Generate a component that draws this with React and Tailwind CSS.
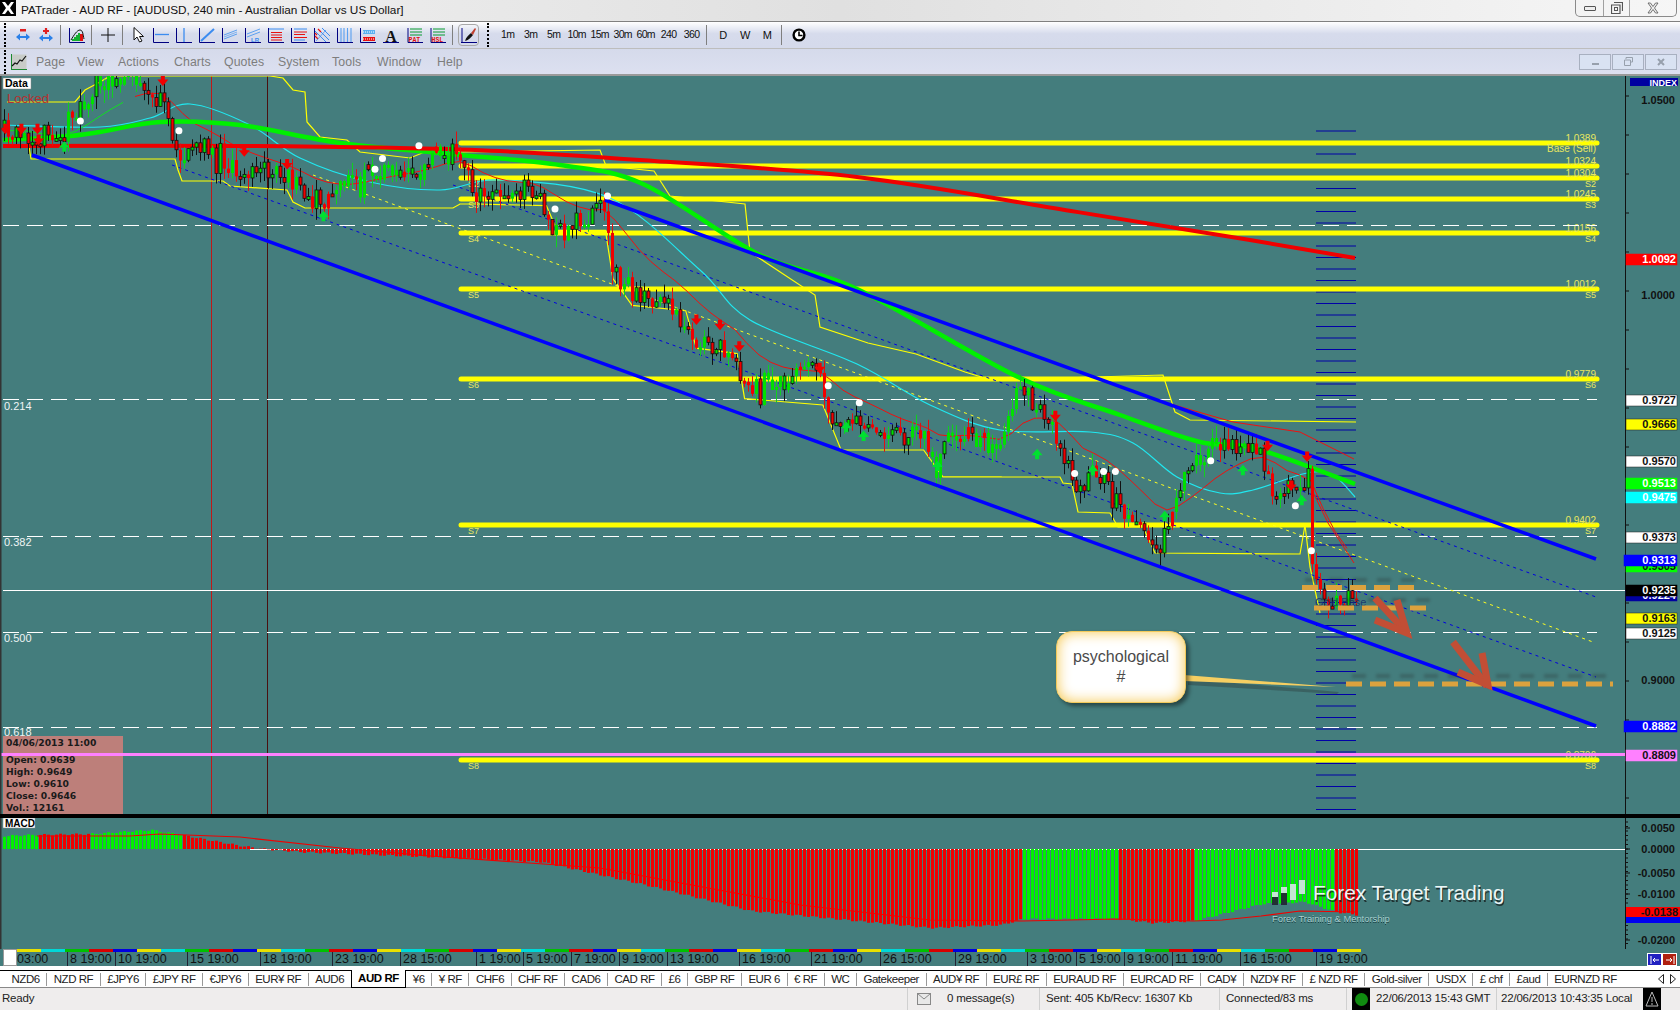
import React from 'react';

// reference was read partly from the shrunk copy, S brings those numbers to page pixels
const S = 1680 / 1568;
const sc = (pts) => pts.map(([x, y]) => [x * S, y * S]);
const toPts = (pts) => pts.map(([x, y]) => `${x.toFixed(1)},${y.toFixed(1)}`).join(' ');

// catmull-rom through the hand read points, so the moving averages don't look like polygons
function smooth(pts) {
  let d = `M${pts[0][0]} ${pts[0][1]}`;
  for (let i = 0; i < pts.length - 1; i++) {
    const p0 = pts[Math.max(i - 1, 0)];
    const p1 = pts[i];
    const p2 = pts[i + 1];
    const p3 = pts[Math.min(i + 2, pts.length - 1)];
    const c1x = p1[0] + (p2[0] - p0[0]) / 6;
    const c1y = p1[1] + (p2[1] - p0[1]) / 6;
    const c2x = p2[0] - (p3[0] - p1[0]) / 6;
    const c2y = p2[1] - (p3[1] - p1[1]) / 6;
    d += `C${c1x.toFixed(1)} ${c1y.toFixed(1)} ${c2x.toFixed(1)} ${c2y.toFixed(1)} ${p2[0].toFixed(1)} ${p2[1].toFixed(1)}`;
  }
  return d;
}

function lerp(pts, x) {
  if (x <= pts[0][0]) return pts[0][1];
  for (let i = 1; i < pts.length; i++) {
    if (x <= pts[i][0]) {
      const [x0, y0] = pts[i - 1];
      const [x1, y1] = pts[i];
      return y0 + ((y1 - y0) * (x - x0)) / (x1 - x0);
    }
  }
  return pts[pts.length - 1][1];
}

let seed = 17;
const rnd = () => {
  seed = (seed * 16807) % 2147483647;
  return seed / 2147483647;
};

const pricePath = sc([
  [0, 122], [20, 122], [35, 132], [55, 128], [70, 108], [85, 88], [105, 78], [125, 72], [140, 82], [150, 95], [157, 122], [172, 150],
  [190, 135], [210, 155], [240, 158], [265, 165], [290, 185], [320, 175], [345, 160], [385, 155], [415, 140], [432, 150], [440, 182],
  [470, 178], [490, 170], [520, 210], [550, 205], [563, 190], [570, 240], [590, 275], [625, 285], [650, 318], [685, 330], [695, 368],
  [720, 358], [760, 345], [778, 395], [800, 388], [830, 405], [860, 408], [872, 430], [890, 402], [930, 418], [950, 360], [980, 398],
  [1005, 462], [1020, 435], [1050, 478], [1080, 510], [1100, 450], [1130, 418], [1170, 412], [1195, 465], [1215, 450], [1221, 435],
  [1224, 520], [1232, 562], [1265, 560],
]);
const greenZones = sc([[60, 130], [305, 420], [710, 760], [850, 950], [1090, 1135]]);

const candles = [];
const ema = [];
let prev = lerp(pricePath, 3);
let avg = prev;
for (let x = 3; x < 1356; x += 4) {
  const target = lerp(pricePath, x);
  const big = rnd() < 0.18 ? 2 : 1;
  const close = target + (rnd() - 0.5) * 20 * big;
  const top = Math.min(prev, close);
  const bot = Math.max(prev, close);
  const zone = greenZones.some(([a, b]) => x >= a && x <= b);
  const up = zone ? rnd() < 0.8 : close < prev;
  candles.push({
    x,
    top,
    h: Math.max(bot - top, 3),
    hi: top - rnd() * 13,
    lo: bot + rnd() * 13,
    up,
    line: zone ? rnd() < 0.2 : rnd() < 0.65,
  });
  avg += (target - avg) * 0.09;
  ema.push([x, avg]);
  prev = close;
}

const blueUpper = [[605, 200], [1596, 559]];
const blueLower = [[32, 155], [1596, 726]];
const redSlow = [[3, 146], [240, 146], [400, 148], [500, 151], [640, 160], [857, 177], [1071, 211], [1250, 240], [1355, 258]];
const greenSlow = [[3, 140], [60, 137], [100, 132], [160, 122], [240, 125], [340, 143], [461, 155], [560, 165], [643, 184], [760, 255], [857, 289], [1018, 377], [1120, 415], [1200, 442], [1254, 448], [1355, 484]];
const cyan = [[3, 125], [100, 127], [150, 118], [190, 104], [250, 125], [300, 158], [370, 182], [440, 190], [500, 180], [610, 198], [700, 270], [750, 320], [857, 364], [930, 405], [1000, 430], [1090, 432], [1133, 443], [1177, 477], [1220, 493], [1253, 490], [1307, 473], [1333, 475], [1355, 497]];
const yellowUp = [[7, 102], [75, 102], [85, 90], [100, 82], [110, 76], [270, 76], [283, 78], [293, 90], [305, 92], [307, 122], [320, 137], [347, 140], [360, 152], [410, 158], [437, 147], [461, 152], [600, 150], [606, 166], [654, 171], [670, 196], [745, 204], [750, 252], [815, 295], [820, 327], [868, 343], [916, 354], [965, 372], [991, 380], [1163, 375], [1175, 412], [1190, 420], [1356, 422]];
const yellowLow = [
  [28, 140], [31, 159], [175, 159], [178, 170], [182, 181], [223, 181], [230, 186], [287, 190], [293, 202], [305, 208], [453, 208], [460, 204], [477, 204],
  ...sc([[510, 192], [520, 215], [565, 215], [572, 260], [590, 285], [640, 290], [650, 325], [688, 330], [695, 372], [768, 378], [785, 420], [862, 420], [880, 445], [935, 445]]),
  [1000, 477], [1060, 477], [1063, 483], [1072, 484], [1078, 512], [1110, 513], [1118, 527], [1143, 527], [1155, 553], [1300, 554], [1305, 525], [1310, 567], [1320, 613],
];
const upperRed = [[1150, 398], [1233, 422], [1300, 432], [1354, 459]];
const lowerRed = [[1307, 480], [1328, 523], [1354, 563]];

const yellowLevels = [
  [143, '1.0389', ''], [166, '1.0324', ''], [178, '1.0304', 'S2'], [199, '1.0245', 'S3'], [233, '1.0156', 'S4'],
  [289, '1.0012', 'S5'], [379, '0.9779', 'S6'], [525, '0.9402', 'S7'], [760, '0.8706', 'S8'],
];
const dashed = [225, 399, 536, 632, 727];
const fibs = [[410, '0.214'], [546, '0.382'], [642, '0.500'], [736, '0.618']];

const dots = sc([[75, 113], [167, 122], [357, 148], [350, 158], [391, 136], [518, 195], [567, 183], [773, 360], [802, 376], [1003, 442], [1030, 440], [1041, 440], [1130, 430], [1209, 472], [1224, 514]]);
const redArrows = sc([[5, 122], [20, 122], [35, 122], [152, 77], [36, 132], [228, 143], [268, 155], [650, 300], [672, 305], [690, 325], [765, 345], [985, 390], [1183, 418], [1205, 455], [1220, 428]]);
const greenArrows = sc([[60, 135], [302, 200], [790, 397], [806, 405], [875, 433], [968, 422], [1020, 437], [1087, 480], [1160, 437], [1215, 465]]);

const axisLabels = [
  [400, '0.9727', '#ffffff', '#111'],
  [424, '0.9666', '#ffff00', '#111'],
  [461, '0.9570', '#ffffff', '#111'],
  [483, '0.9513', '#00ff00', '#fff'],
  [497, '0.9475', '#00ffff', '#fff'],
  [537, '0.9373', '#ffffff', '#111'],
  [566, '0.9305', '#00ff00', '#111'],
  [560, '0.9313', '#0000ff', '#fff'],
  [595, '0.9224', '#0000a0', '#fff'],
  [590, '0.9235', '#000000', '#fff'],
  [618, '0.9163', '#ffff00', '#111'],
  [633, '0.9125', '#ffffff', '#111'],
  [726, '0.8882', '#0000ff', '#fff'],
  [259, '1.0092', '#ff0000', '#fff'],
  [755, '0.8809', '#ff80ff', '#111'],
];

const priceTicks = [[100, '1.0500'], [295, '1.0000'], [680, '0.9000']];

const macdBottom = [[3, 836], [30, 835], [90, 834], [150, 830], [180, 835], [240, 846], [262, 849], [300, 852], [430, 857], [540, 862], [640, 884], [750, 911], [930, 928], [1000, 925], [1022, 919], [1117, 919], [1152, 923], [1193, 921], [1261, 904], [1304, 902], [1335, 912], [1356, 915]];
const macdSignal = [[37, 836], [130, 836], [160, 834], [240, 837], [340, 848], [430, 856], [600, 868], [800, 905], [930, 920], [1022, 921], [1117, 919], [1193, 921], [1222, 920], [1261, 916], [1300, 911], [1356, 912]];
const macdGreen = [[3, 37], [89, 182], [1021, 1117], [1193, 1334]];

const timeLabels = [
  ['03:00', 'w-[50px]'], ['8 19:00', 'w-[48px]'], ['10 19:00', 'w-[72px]'], ['15 19:00', 'w-[73px]'], ['18 19:00', 'w-[72px]'], ['23 19:00', 'w-[68px]'],
  ['28 15:00', 'w-[76px]'], ['1 19:00', 'w-[47px]'], ['5 19:00', 'w-[48px]'], ['7 19:00', 'w-[48px]'], ['9 19:00', 'w-[48px]'], ['13 19:00', 'w-[72px]'],
  ['16 19:00', 'w-[72px]'], ['21 19:00', 'w-[69px]'], ['26 15:00', 'w-[75px]'], ['29 19:00', 'w-[72px]'], ['3 19:00', 'w-[49px]'], ['5 19:00', 'w-[48px]'],
  ['9 19:00', 'w-[48px]'], ['11 19:00', 'w-[68px]'], ['16 15:00', 'w-[76px]'], ['19 19:00', 'w-[60px]'],
];

const tabs = ['NZD6', 'NZD RF', '£JPY6', '£JPY RF', '€JPY6', 'EUR¥ RF', 'AUD6', 'AUD RF', '¥6', '¥ RF', 'CHF6', 'CHF RF', 'CAD6', 'CAD RF', '£6', 'GBP RF', 'EUR 6', '€ RF', 'WC', 'Gatekeeper', 'AUD¥ RF', 'EUR£ RF', 'EURAUD RF', 'EURCAD RF', 'CAD¥', 'NZD¥ RF', '£ NZD RF', 'Gold-silver', 'USDX', '£ chf', '£aud', 'EURNZD RF'];

const stripColors = ['#e8e000', '#00d8d8', '#00c000', '#d80000', '#0000e0'];

function Grip() {
  return <div className="h-[24px] w-[3px] self-center border-l-2 border-dotted border-black" />;
}

function Sep() {
  return <div className="mx-[3px] h-[20px] w-px self-center bg-[#7f7f7f]" />;
}

function Ic({ children, className = '' }) {
  return (
    <svg viewBox="0 0 16 16" className={`h-[16px] w-[16px] ${className}`}>
      {children}
    </svg>
  );
}

const Axes = () => <path d="M.5 1V15.5H16" fill="none" stroke="#000080" />;

const toolIcons = [
  <Ic><rect x="5" y="2" width="6" height="2.5" fill="#e02020" /><path d="M1 10l4-3.5v7zM15 10l-4-3.5v7z" fill="#2a80e8" /><rect x="5" y="9" width="6" height="2" fill="#2a80e8" /></Ic>,
  <Ic><path d="M8 1v6M5 4h6" stroke="#e02020" strokeWidth="2.2" /><path d="M1 11l4-3.5v7zM15 11l-4-3.5v7z" fill="#2a80e8" /><rect x="5" y="10" width="6" height="2" fill="#2a80e8" /></Ic>,
];

const drawIcons = [
  <Ic><Axes /><path d="M2 7.5H16" stroke="#3b8cf0" strokeWidth="1.3" /></Ic>,
  <Ic><Axes /><path d="M8 1V15" stroke="#3b8cf0" strokeWidth="1.3" /></Ic>,
  <Ic><Axes /><path d="M2 14L15 2" stroke="#3b8cf0" strokeWidth="2" /></Ic>,
  <Ic><Axes /><path d="M2 8L15 3M2 12L15 7" stroke="#5aa0f0" strokeWidth="1" /><path d="M2 10L15 5" stroke="#5aa0f0" strokeWidth=".7" /></Ic>,
  <Ic><Axes /><path d="M2 7L15 2M2 10L15 5" stroke="#5aa0f0" strokeWidth="1" /><text x="6" y="14.5" fontSize="6" fontWeight="700" fill="#3b8cf0" className="font-['Liberation_Sans',sans-serif]">LR</text></Ic>,
  <Ic><Axes /><path d="M1 2H16" stroke="#3b8cf0" /><path d="M3 5.5H14M3 8H14M3 10.5H14M3 13H14" stroke="#e81010" strokeWidth="1.2" /></Ic>,
  <Ic><Axes /><path d="M3 2H16M3 13H14" stroke="#3b8cf0" /><path d="M3 5H16M3 7.5H14M3 10.5H16" stroke="#e81010" strokeWidth="1.2" /></Ic>,
  <Ic><Axes /><path d="M1 4L12 15M4 2L15 13M8 1L16 9" stroke="#3b8cf0" strokeWidth="1" /><path d="M1 6L3 8M4 2L7 5M1 9L4 12" stroke="#e81010" strokeWidth="1.2" /><path d="M2 14L12 3" stroke="#3b8cf0" strokeWidth=".7" /></Ic>,
  <Ic><Axes /><path d="M4 1V15M7 1V15M10.500 1V15M14 1V15" stroke="#5aa0f0" strokeWidth="1.1" /></Ic>,
  <Ic><Axes /><rect x="3" y="3" width="12" height="4" fill="#5ab0f0" /><rect x="3" y="10" width="12" height="4" fill="#e81010" /><path d="M3 5h12M3 12h12" stroke="#fff" strokeDasharray="1 1" /></Ic>,
  <Ic><path d="M0 15.500H16" stroke="#000080" /><text x="8" y="15" textAnchor="middle" fontSize="16" fontWeight="700" fill="#111" className="font-['Liberation_Serif',serif]">A</text></Ic>,
  <Ic><path d="M1 1V15.500H16" fill="none" stroke="#000080" /><path d="M3 2H15M3 5H15M3 8H15" stroke="#089a30" /><text x="1.500" y="14.500" fontSize="6.500" fontWeight="700" fill="#e01010" className="font-['Liberation_Mono',monospace]">PAT</text></Ic>,
  <Ic><path d="M1 1V15.500H16" fill="none" stroke="#000080" /><path d="M3 2H15M3 5H15M3 8H15" stroke="#089a30" /><text x="1.500" y="14.500" fontSize="6.500" fontWeight="700" fill="#e01010" className="font-['Liberation_Mono',monospace]">HSL</text></Ic>,
];

const frames = ['1m', '3m', '5m', '10m', '15m', '30m', '60m', '240', '360'];

function TitleBar() {
  return (
    <div className="flex h-[22px] items-start border-b border-[#808080] bg-linear-to-r from-[#f4f4f4] via-[#e0e0e0] to-[#f6f6f6]">
      <div className="flex h-[16px] w-[16px] items-center justify-center bg-black">
        <svg viewBox="0 0 14 14" className="h-[14px] w-[14px]">
          <path d="M1 1H4L7 5L10 1H13L9 7L13 13H10L7 9L4 13H1L5 7Z" fill="#fff" />
        </svg>
      </div>
      <div className="ml-[5px] text-[11.800px] leading-[21px] text-[#111]">PATrader - AUD RF - [AUDUSD, 240 min - Australian Dollar vs US Dollar]</div>
      <div className="mr-[3px] ml-auto flex h-[17px] w-[102px] rounded-b-[5px] border border-t-0 border-[#8a8a8a]">
        <div className="flex w-[28px] items-center justify-center border-r border-[#a0a0a0]">
          <div className="h-[5px] w-[12px] rounded-[1px] border border-[#555] bg-[#eee]" />
        </div>
        <div className="flex w-[26px] items-center justify-center border-r border-[#a0a0a0]">
          <svg viewBox="0 0 12 12" className="h-[12px] w-[12px]"><path d="M3 .5H11.500V9M.5 3H9V11.500H.5Z" fill="none" stroke="#555" strokeWidth="1.200" /><rect x="3.500" y="5.500" width="3" height="3" fill="none" stroke="#555" /></svg>
        </div>
        <div className="flex flex-1 items-center justify-center">
          <svg viewBox="0 0 12 12" className="h-[12px] w-[12px]"><path d="M1 1H3.500L6 4.500L8.500 1H11L7.500 6L11 11H8.500L6 7.500L3.500 11H1L4.500 6Z" fill="#eee" stroke="#555" strokeWidth=".8" /></svg>
        </div>
      </div>
    </div>
  );
}

function Toolbar() {
  return (
    <div className="flex h-[27px] items-center border-b border-[#bdbdbd] bg-linear-to-b from-white via-[#d6dbec] via-45% to-[#d5daeb] pl-[4px]">
      <Grip />
      {toolIcons.map((ic, i) => (
        <div key={i} className={`flex w-[23px] justify-center ${i === 0 ? 'ml-[4px]' : ''}`}>{ic}</div>
      ))}
      <Sep />
      <div className="ml-[1px] flex w-[23px] justify-center">
        <Ic><Axes /><path d="M3 14V12H5V10H7V8H9V6H11V14Z" fill="#14b030" /><rect x="11" y="7" width="3" height="7" fill="#e01010" /><path d="M2 13C5 8 8 3 11 3S14 8 15 12" fill="none" stroke="#111" /></Ic>
      </div>
      <Sep />
      <div className="ml-[1px] flex w-[23px] justify-center">
        <svg viewBox="0 0 14 14" className="h-[14px] w-[14px]"><path d="M7 0V14M0 7H14" stroke="#111" /></svg>
      </div>
      <Sep />
      <div className="ml-[1px] flex w-[23px] justify-center">
        <svg viewBox="0 0 11 16" className="h-[16px] w-[11px]"><path d="M1 .5V13L4 10L6.500 15L9 14L6.500 9.500H10.500Z" fill="#fff" stroke="#111" /></svg>
      </div>
      <div className="-ml-[1px] flex">
        {drawIcons.map((ic, i) => (
          <div key={i} className="flex w-[23.100px] justify-center">{ic}</div>
        ))}
      </div>
      <Sep />
      <div className="ml-[2px] flex h-[22px] w-[21px] items-center justify-center rounded-[4px] border border-[#a8a8a8]">
        <svg viewBox="0 0 16 16" className="h-[16px] w-[16px]"><path d="M0 15.500H16" stroke="#000080" /><path d="M1 1V15" stroke="#000080" /><path d="M4 14C5 10 8 8 10 6L12 8C10 10 8 13 4 14Z" fill="#111" /><path d="M10 6L14 1L15 2L12 8Z" fill="#c04030" /></svg>
      </div>
      <div className="ml-[8px]"><Grip /></div>
      <div className="ml-[6px] flex items-center text-[10.500px] tracking-[-0.6px] text-[#111]">
        {frames.map((t) => (
          <div key={t} className="w-[23px] text-center">{t}</div>
        ))}
        <Sep />
        <div className="ml-[2px] flex text-[11px] tracking-normal">
          {['D', 'W', 'M'].map((t) => (
            <div key={t} className="w-[22px] text-center">{t}</div>
          ))}
        </div>
        <Sep />
      </div>
      <div className="ml-[7px]">
        <svg viewBox="0 0 14 14" className="h-[14px] w-[14px]"><circle cx="7" cy="7" r="5.400" fill="#fff" stroke="#000" strokeWidth="2.400" /><path d="M7 3.500V7.500H10.500" fill="none" stroke="#000" strokeWidth="1.600" /></svg>
      </div>
    </div>
  );
}

const menus = [['Page', 'w-[41px]'], ['View', 'w-[41px]'], ['Actions', 'w-[56px]'], ['Charts', 'w-[50px]'], ['Quotes', 'w-[54px]'], ['System', 'w-[54px]'], ['Tools', 'w-[45px]'], ['Window', 'w-[60px]'], ['Help', 'w-[30px]']];

function MenuBar() {
  return (
    <div className="flex h-[27px] items-center border-b-[2px] border-[#9a9a9a] bg-linear-to-b from-[#d5daeb] to-[#dce0f0] pl-[4px]">
      <Grip />
      <svg viewBox="0 0 16 16" className="ml-[4px] h-[16px] w-[16px]">
        <rect x=".5" y=".5" width="15" height="15" fill="#c8ccc8" />
        <path d="M0 15.500H16M.5 0V16" stroke="#1a8a30" />
        <path d="M1 12L4 9L6 10L9 6L11 7L15 2" fill="none" stroke="#111" strokeWidth="1.200" />
      </svg>
      <div className="mt-[2px] ml-[9px] flex text-[12.300px] tracking-[0.1px] text-[#7d7d7d]">
        {menus.map(([m, w]) => (
          <div key={m} className={w}>{m}</div>
        ))}
      </div>
      <div className="mr-[3px] ml-auto flex gap-[1px]">
        <div className="flex h-[16px] w-[32px] items-center justify-center border border-[#a8b0c0] bg-[#d9e2f2]"><div className="mt-[4px] h-[2px] w-[7px] bg-[#97a0ac]" /></div>
        <div className="flex h-[16px] w-[32px] items-center justify-center border border-[#a8b0c0] bg-[#d9e2f2]">
          <svg viewBox="0 0 9 9" className="h-[9px] w-[9px]"><path d="M2 2V.5H8.500V5H6.500M.5 3H6.500V8.500H.5Z" fill="none" stroke="#97a0ac" /></svg>
        </div>
        <div className="flex h-[16px] w-[32px] items-center justify-center border border-[#a8b0c0] bg-[#d9e2f2]">
          <svg viewBox="0 0 8 8" className="h-[8px] w-[8px]"><path d="M1 1L7 7M7 1L1 7" stroke="#97a0ac" strokeWidth="2" /></svg>
        </div>
      </div>
    </div>
  );
}

function AxisTag({ y, text, bg, fg }) {
  const wide = bg === '#0000ff';
  return (
    <g>
      <rect x={wide ? 1624 : 1626} y={y - 5} width={wide ? 53 : 51} height="11" fill={bg} stroke={bg === '#ffffff' || bg === '#ffff00' ? '#222' : bg} strokeWidth=".5" />
      <text x="1676" y={y + 4} textAnchor="end" fontSize="11" fontWeight="700" fill={fg}>{text}</text>
    </g>
  );
}

function MainChart() {
  const ticks = [];
  for (let y = 96; y < 815; y += 39) ticks.push(y);
  const nav = [];
  for (let y = 131; y < 815; y += 11.500) nav.push(y);
  return (
    <div className="relative h-[738px]">
      <svg viewBox="0 76 1680 738" className="block h-[738px] w-[1680px] font-['Liberation_Sans',sans-serif]">
        <rect x="0" y="76" width="1680" height="738" fill="#447d7d" />
        <path d="M211.500 76V814" stroke="#c01818" />
        <path d="M267.500 76V814" stroke="#4a1010" />

        {nav.map((y) => (
          <path key={y} d={`M1316 ${y}H1356`} stroke="#0000a8" />
        ))}

        {yellowLevels.map(([y, t, s]) => (
          <g key={y}>
            <path d={`M461 ${y}H1597`} stroke="#ffff00" strokeWidth="5" strokeLinecap="round" />
            <text x="1596" y={y - 1} textAnchor="end" fontSize="10" fill="#e8e860">{t}</text>
            {s && <text x="1596" y={y + 9} textAnchor="end" fontSize="9" fill="#e8e860">{s}</text>}
            {s && <text x="468" y={y + 9} fontSize="9" fill="#e8e860">{s}</text>}
          </g>
        ))}
        <text x="1596" y="152" textAnchor="end" fontSize="10" fill="#e8e860">Base (Sell)</text>

        {dashed.map((y) => (
          <path key={y} d={`M3 ${y + 0.5}H1597`} stroke="#fff" strokeWidth="1.200" strokeDasharray="16 8" />
        ))}
        <path d="M3 590.500H1625" stroke="#fff" strokeWidth="1.200" />
        {fibs.map(([y, t]) => (
          <text key={y} x="4" y={y} fontSize="11" fill="#eef4f4">{t}</text>
        ))}

        <polyline points={toPts(yellowUp)} fill="none" stroke="#ffff00" strokeWidth="1.200" />
        <polyline points={toPts(yellowLow)} fill="none" stroke="#ffff00" strokeWidth="1.200" />
        <path d="M172 165L1596 677M453 185L1596 597" stroke="#0000e0" strokeDasharray="3 4" fill="none" />
        <path d="M313 175L1593 642" stroke="#ffff20" strokeDasharray="3 4" fill="none" />

        <path d={smooth(cyan)} fill="none" stroke="#20e8f0" strokeWidth="1.200" />
        <polyline points={toPts(ema.filter((_, i) => i % 3 === 0 && i > 30))} fill="none" stroke="#f01010" strokeWidth="1" />
        <polyline points={toPts(ema.filter((_, i) => i % 3 === 0).slice(0, 11))} fill="none" stroke="#10e020" strokeWidth="1" />
        <polyline points={toPts(upperRed)} fill="none" stroke="#f01010" strokeWidth="1" />
        <polyline points={toPts(lowerRed)} fill="none" stroke="#f01010" strokeWidth="1" />

        <path d={smooth(greenSlow)} fill="none" stroke="#00f000" strokeWidth="4.500" />
        <path d={smooth(redSlow)} fill="none" stroke="#f00000" strokeWidth="4" />

        {candles.map((c) => (
          <g key={c.x}>
            <path d={`M${c.x + 1.500} ${c.hi}V${c.lo}`} stroke={c.line ? '#111' : c.up ? '#10d020' : '#e01010'} />
            <rect x={c.x} y={c.top} width="3" height={c.h} fill={c.up ? '#00e000' : '#f00000'} stroke={c.line ? '#111' : 'none'} strokeWidth=".8" />
          </g>
        ))}

        <path d={`M${blueUpper[0][0]} ${blueUpper[0][1]}L${blueUpper[1][0]} ${blueUpper[1][1]}`} stroke="#0000ff" strokeWidth="3.500" />
        <path d={`M${blueLower[0][0]} ${blueLower[0][1]}L${blueLower[1][0]} ${blueLower[1][1]}`} stroke="#0000ff" strokeWidth="3.500" />
        <path d="M0 754.500H1625" stroke="#ff80ff" strokeWidth="3" />

        {dots.map(([x, y]) => (
          <circle key={`${x}-${y}`} cx={x} cy={y} r="3.500" fill="#fff" />
        ))}
        {redArrows.map(([x, y]) => (
          <path key={`${x}-${y}`} d={`M${x - 2} ${y - 7}h4v4h3.500l-5.500 6.500l-5.500-6.500h3.500Z`} fill="#f00000" />
        ))}
        {greenArrows.map(([x, y]) => (
          <path key={`${x}-${y}`} d={`M${x - 2} ${y + 7}h4v-4h3.500l-5.500-6.500l-5.500 6.500h3.500Z`} fill="#00e030" />
        ))}
        <text x="1315" y="606" fontSize="11" fill="#1c3a70">Gold Base</text>

        <g className="blur-[1.500px]" opacity=".25">
          <path d="M1305 580H1420M1320 600H1432M1352 676H1616" stroke="#222" strokeWidth="4" strokeDasharray="14 10" />
        </g>
        <g stroke="#dca23e" strokeWidth="5" strokeDasharray="16 8" fill="none">
          <path d="M1302 587.500H1418" />
          <path d="M1314 608H1429" />
          <path d="M1346 684H1613" />
        </g>
        <g stroke="#c24e35" strokeWidth="7" fill="none">
          <path d="M1375 598L1407 633" />
          <path d="M1375 620L1407 633L1397 600" />
          <path d="M1453 642L1487 686" />
          <path d="M1458 672L1488 685L1482 653" />
        </g>
        <path d="M1186 681L1186 675L1337 688L1335 690Z" fill="#262626" opacity=".3" transform="translate(2 4)" />
        <path d="M1184 675L1336 687L1184 681Z" fill="#f6cf62" />

        <rect x="3" y="78" width="28" height="11" fill="#fff" stroke="#888" strokeWidth=".5" />
        <text x="5" y="87" fontSize="10.500" fontWeight="700" fill="#000">Data</text>
        <text x="7" y="103" fontSize="13" fill="#b83030">Locked</text>

        <path d="M0 76V814" stroke="#333" strokeWidth="3" />
        <rect x="1625" y="76" width="55" height="738" fill="#447d7d" />
        <path d="M1625.500 76V814" stroke="#111" />
        {ticks.map((y) => (
          <path key={y} d={`M1626 ${y}h3`} stroke="#111" />
        ))}
        <rect x="1630" y="78" width="48" height="8" fill="#0000a0" />
        <text x="1677" y="85.500" textAnchor="end" fontSize="9" fontWeight="700" fill="#fff">INDEX</text>
        {priceTicks.map(([y, t]) => (
          <text key={y} x="1675" y={y + 4} textAnchor="end" fontSize="11" fontWeight="700" fill="#111">{t}</text>
        ))}
        {axisLabels.map(([y, t, bg, fg]) => (
          <AxisTag key={t} y={y} text={t} bg={bg} fg={fg} />
        ))}
      </svg>

      <div className="absolute top-[555px] left-[1056px] flex h-[72px] w-[130px] flex-col items-center justify-center rounded-[16px] border border-[#f2c95a] bg-white text-center text-[16px] leading-[20px] text-[#4a4a4a] shadow-[inset_0_0_14px_#f6c64a,3px_3px_4px_rgba(0,0,0,0.45)]">
        <div>psychological</div>
        <div>#</div>
      </div>

      <div className="absolute top-[660px] left-[3px] h-[78px] w-[120px] bg-[#bd7f7a] pt-[1px] pl-[3px] font-['DejaVu_Sans',sans-serif] text-[9.200px] leading-[12px] font-bold text-[#1a1a1a]">
        <div className="mb-[5px]">04/06/2013 11:00</div>
        <div>Open: 0.9639</div>
        <div>High: 0.9649</div>
        <div>Low: 0.9610</div>
        <div>Close: 0.9646</div>
        <div>Vol.: 12161</div>
        <div className="absolute top-[17px] left-0 h-[3px] w-full bg-[#ff80ff]" />
      </div>
    </div>
  );
}

function Macd() {
  const bars = [];
  for (let x = 3; x < 1356; x += 4) {
    const green = macdGreen.some(([a, b]) => x >= a && x < b);
    const v = lerp(macdBottom, x) + Math.sin(x * 0.4) * 0.8;
    bars.push({ x, green, y: Math.min(v, 849), h: Math.abs(v - 849) });
  }
  const labels = [[828, '0.0050'], [849, '0.0000'], [873, '-0.0050'], [894, '-0.0100'], [940, '-0.0200']];
  const minor = [];
  for (let y = 822; y < 948; y += 4.500) minor.push(y);
  return (
    <svg viewBox="0 818 1680 131" className="block h-[131px] w-[1680px] font-['Liberation_Sans',sans-serif]">
      <rect x="0" y="818" width="1680" height="131" fill="#447d7d" />
      <path d="M250 849.500H1625" stroke="#fff" />
      {bars.map((b) => (
        <rect key={b.x} x={b.x} y={b.y} width="3" height={b.h} fill={b.green ? '#00f000' : '#f00000'} />
      ))}
      <polyline points={toPts(macdSignal)} fill="none" stroke="#f00000" strokeWidth="1.200" />

      <g fill="#d8e8e8" opacity=".9">
        <rect x="1272" y="897" width="6" height="8" fill="#223" />
        <rect x="1281" y="893" width="6" height="12" fill="#223" />
        <rect x="1272" y="892" width="6" height="5" />
        <rect x="1281" y="887" width="6" height="6" />
        <rect x="1290" y="884" width="6" height="16" />
        <rect x="1299" y="880" width="6" height="14" />
      </g>
      <text x="1314" y="902" fontSize="20.800" fill="#111" opacity=".7">Forex Target Trading</text>
      <text x="1313" y="900" fontSize="20.800" fill="#eef6f6">Forex Target Trading</text>
      <text x="1272" y="923" fontSize="9.400" fill="#0c2a30" opacity=".8">Forex Training &amp; Mentorship</text>
      <text x="1272" y="922" fontSize="9.400" fill="#a8d0d0">Forex Training &amp; Mentorship</text>

      <path d="M0 818V949" stroke="#333" strokeWidth="3" />
      <rect x="3" y="818" width="32" height="10" fill="#fff" stroke="#888" strokeWidth=".5" />
      <text x="5" y="826.500" fontSize="10" fontWeight="700" fill="#000">MACD</text>

      <rect x="1626" y="818" width="54" height="131" fill="#447d7d" />
      <path d="M1625.500 818V949" stroke="#111" />
      {minor.map((y) => (
        <path key={y} d={`M1626 ${y}h2`} stroke="#111" />
      ))}
      {labels.map(([y, t]) => (
        <g key={t}>
          <path d={`M1626 ${y}h4`} stroke="#111" />
          <text x="1675" y={y + 4} textAnchor="end" fontSize="11" fontWeight="700" fill="#111">{t}</text>
        </g>
      ))}
      <rect x="1626" y="917" width="54" height="6" fill="#0000f0" />
      <rect x="1626" y="907" width="54" height="10" fill="#ff0000" />
      <text x="1678" y="916" textAnchor="end" fontSize="11" fontWeight="700" fill="#111">-0.0138</text>
    </svg>
  );
}

function TimeAxis() {
  const strip = [];
  for (let i = 0; i * 24 + 17 < 1356; i++) strip.push(i);
  return (
    <div className="relative flex h-[17px] bg-[#447d7d]">
      <div className="z-10 ml-[3px] h-[17px] w-[14px] border border-[#999] bg-white" />
      <div className="relative flex-1">
        <svg viewBox="0 0 1360 3" className="block h-[3px] w-[1360px]">
          {strip.map((i) => (
            <rect key={i} x={i * 24} y="0" width="24" height="3" fill={stripColors[i % 5]} />
          ))}
        </svg>
        <div className="flex text-[12.500px] leading-[14px] text-[#111]">
          {timeLabels.map(([t, w], i) => (
            <div key={i} className={`h-[14px] shrink-0 overflow-hidden whitespace-nowrap ${w} ${i === 0 ? '' : 'border-l border-[#223] pl-[2px]'}`}>{t}</div>
          ))}
        </div>
      </div>
      <div className="mt-[4px] mr-[3px] flex h-[13px]">
        <div className="flex w-[15px] items-center justify-center border border-white bg-[#2020c0]">
          <svg viewBox="0 0 10 10" className="h-[10px] w-[10px]"><path d="M1 1V9M9 5H3M5 3L3 5L5 7" fill="none" stroke="#fff" /></svg>
        </div>
        <div className="flex w-[15px] items-center justify-center border border-white bg-[#b02010]">
          <svg viewBox="0 0 10 10" className="h-[10px] w-[10px]"><path d="M9 1V9M1 5H7M5 3L7 5L5 7" fill="none" stroke="#fff" /></svg>
        </div>
      </div>
    </div>
  );
}

function Tabs() {
  return (
    <div className="flex h-[22px] items-end bg-white">
      <div className="flex h-[18px] flex-1 items-center border-t border-b border-t-black border-b-[#888] pl-[5px] text-[11.500px] tracking-[-0.45px] whitespace-nowrap text-[#222]">
        {tabs.map((t, i) =>
          t === 'AUD RF' ? (
            <div key={t} className="-my-px flex h-[18px] items-center border-x border-b border-black bg-white px-[6.500px] font-bold text-black">{t}</div>
          ) : (
            <div key={t} className={`px-[6.500px] leading-[13px] ${i === tabs.length - 1 || tabs[i + 1] === 'AUD RF' ? '' : 'border-r border-[#999]'}`}>{t}</div>
          ),
        )}
        <div className="mr-[4px] ml-auto flex gap-[6px]">
          <svg viewBox="0 0 6 10" className="h-[10px] w-[6px]"><path d="M5.500 .5L.5 5L5.500 9.500Z" fill="none" stroke="#222" /></svg>
          <svg viewBox="0 0 6 10" className="h-[10px] w-[6px]"><path d="M.5 .5L5.500 5L.5 9.500Z" fill="none" stroke="#222" /></svg>
        </div>
      </div>
    </div>
  );
}

function StatusBar() {
  const cell = 'flex h-full items-center border-l border-[#d0d0d0]';
  return (
    <div className="flex h-[22px] items-center bg-[#efeded] text-[11.500px] tracking-[-0.2px] text-[#222]">
      <div className="w-[907px] pl-[2px]">Ready</div>
      <div className={`${cell} w-[132px]`}>
        <svg viewBox="0 0 14 12" className="ml-[9px] h-[12px] w-[14px]"><rect x=".5" y=".5" width="13" height="11" fill="#e8e8e8" stroke="#888" /><path d="M.5 .5L7 6L13.500 .5" fill="none" stroke="#888" /></svg>
        <span className="ml-[16px]">0 message(s)</span>
      </div>
      <div className={`${cell} w-[180px] pl-[6px]`}>Sent: 405 Kb/Recv: 16307 Kb</div>
      <div className={`${cell} w-[127px] pl-[6px]`}>Connected/83 ms</div>
      <div className={`${cell} w-[150px] pl-[5px]`}>
        <div className="flex h-[22px] w-[18px] items-center justify-center bg-black"><div className="h-[13px] w-[13px] rounded-full bg-[#108a10]" /></div>
        <span className="ml-[6px] whitespace-nowrap">22/06/2013 15:43 GMT</span>
      </div>
      <div className={`${cell} w-[147px] pl-[4px] whitespace-nowrap`}>22/06/2013 10:43:35 Local</div>
      <div className="flex h-[22px] w-[18px] items-center justify-center bg-black">
        <svg viewBox="0 0 14 16" className="h-[16px] w-[14px]"><path d="M7 1L13 15H1Z" fill="none" stroke="#bbb" /><path d="M7 6V11M7 12V14" stroke="#bbb" /></svg>
      </div>
    </div>
  );
}

export default function App() {
  return (
    <div className="h-[1010px] w-[1680px] overflow-hidden bg-white font-['Liberation_Sans',Arial,sans-serif]">
      <TitleBar />
      <Toolbar />
      <MenuBar />
      <MainChart />
      <div className="h-[4px] bg-black" />
      <Macd />
      <TimeAxis />
      <Tabs />
      <StatusBar />
    </div>
  );
}
